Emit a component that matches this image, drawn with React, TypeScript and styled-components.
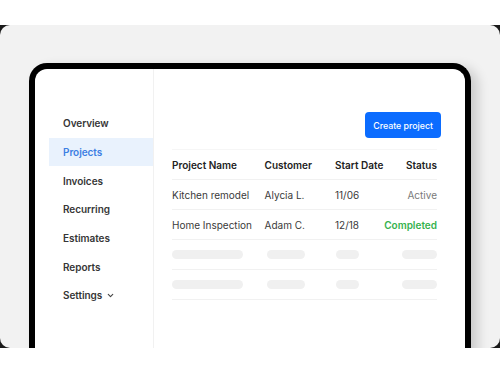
import { ChevronDown } from 'lucide-react';
import styled, { createGlobalStyle } from 'styled-components';

const GlobalStyle = createGlobalStyle`
  html, body {
    margin: 0;
    padding: 0;
    background: #ffffff;
    font-family: Inter, 'Noto Sans', sans-serif;
  }
`;

const Page = styled.div`
  padding-top: 25px;
  width: 500px;
  height: 375px;
  box-sizing: border-box;
  background: #ffffff;
`;

const Backdrop = styled.div`
  background: #1a1a1a;
`;

const Panel = styled.div`
  height: 323px;
  background: #f2f2f2;
  border-radius: 10px;
  overflow: hidden;
  padding: 38px 29px 0;
  box-sizing: border-box;
`;

const Device = styled.div`
  height: 320px;
  border: 6px solid #000;
  border-bottom: none;
  border-radius: 18px 18px 0 0;
  background: #fff;
  box-shadow: 7px 4px 12px rgba(0, 0, 0, 0.16);
  display: flex;
  overflow: hidden;
`;

const Sidebar = styled.nav`
  width: 119px;
  flex: none;
  border-right: 1px solid #f1f1f1;
  padding: 40px 0 0 14px;
  box-sizing: border-box;
  display: flex;
  flex-direction: column;
`;

const NavItem = styled.div<{ $active?: boolean }>`
  height: 28.7px;
  display: flex;
  align-items: center;
  gap: 4px;
  padding-left: 14px;
  font-size: 10px;
  letter-spacing: -0.05px;
  font-weight: 600;
  color: ${({ $active }) => ($active ? '#3d7fe3' : '#363636')};
  background: ${({ $active }) => ($active ? '#e9f2fd' : 'transparent')};
  svg {
    color: #444;
    margin-top: 1px;
  }
`;

const Main = styled.main`
  flex: 1;
  padding: 43px 28px 0 18px;
  display: flex;
  flex-direction: column;
`;

const ActionRow = styled.div`
  display: flex;
  justify-content: flex-end;
  margin-right: -4px;
  margin-bottom: 11px;
`;

const Button = styled.button`
  height: 26px;
  padding: 0 8px;
  border: none;
  border-radius: 4px;
  background: #0b6cff;
  color: #fff;
  font-family: inherit;
  font-size: 8.8px;
  font-weight: 500;
`;

const Table = styled.div`
  border-top: 1px solid #f6f6f6;
`;

const Row = styled.div`
  height: 30px;
  display: grid;
  grid-template-columns: 92.6px 70.4px 1fr auto;
  align-items: center;
  border-bottom: 1px solid #f1f1f1;
  box-sizing: border-box;
`;

const Cell = styled.div<{ $head?: boolean }>`
  font-size: 10px;
  white-space: nowrap;
  font-weight: ${({ $head }) => ($head ? 600 : 400)};
  color: ${({ $head }) => ($head ? '#222' : '#3a3a3a')};
`;

const Status = styled(Cell)<{ $done?: boolean }>`
  justify-self: end;
  font-weight: ${({ $done }) => ($done ? 600 : 400)};
  color: ${({ $done }) => ($done ? '#36b24e' : '#7a7a7a')};
`;

const Skeleton = styled.div<{ $w: number; $shift?: number }>`
  width: ${({ $w }) => $w}px;
  height: 9px;
  border-radius: 5px;
  background: #f0f0f0;
  margin-left: ${({ $shift }) => $shift ?? 0}px;
`;

const nav = ['Overview', 'Projects', 'Invoices', 'Recurring', 'Estimates', 'Reports'];

const rows = [
  { name: 'Kitchen remodel', customer: 'Alycia L.', date: '11/06', status: 'Active' },
  { name: 'Home Inspection', customer: 'Adam C.', date: '12/18', status: 'Completed' },
];

export default function App() {
  return (
    <Page>
      <GlobalStyle />
      <Backdrop>
        <Panel>
          <Device>
            <Sidebar>
              {nav.map((item) => (
                <NavItem key={item} $active={item === 'Projects'}>
                  {item}
                </NavItem>
              ))}
              <NavItem>
                Settings <ChevronDown size={9} strokeWidth={3} />
              </NavItem>
            </Sidebar>
            <Main>
              <ActionRow>
                <Button>Create project</Button>
              </ActionRow>
              <Table>
                <Row>
                  <Cell $head>Project Name</Cell>
                  <Cell $head>Customer</Cell>
                  <Cell $head>Start Date</Cell>
                  <Cell $head>Status</Cell>
                </Row>
                {rows.map((r) => (
                  <Row key={r.name}>
                    <Cell>{r.name}</Cell>
                    <Cell>{r.customer}</Cell>
                    <Cell>{r.date}</Cell>
                    <Status $done={r.status === 'Completed'}>{r.status}</Status>
                  </Row>
                ))}
                {[0, 1].map((i) => (
                  <Row key={i}>
                    <Skeleton $w={71} />
                    <Skeleton $w={38} $shift={2} />
                    <Skeleton $w={23} $shift={1} />
                    <Skeleton $w={35} />
                  </Row>
                ))}
              </Table>
            </Main>
          </Device>
        </Panel>
      </Backdrop>
    </Page>
  );
}
